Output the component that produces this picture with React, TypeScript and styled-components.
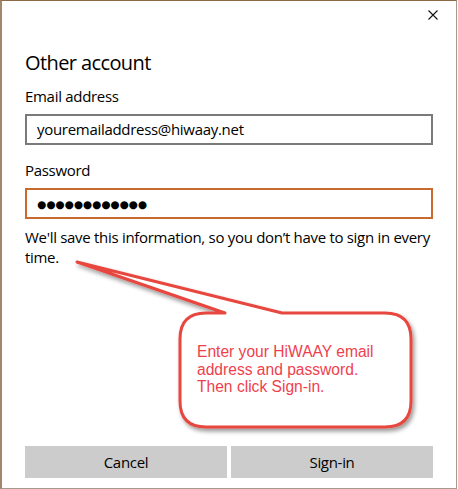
import React from 'react';
import styled, { createGlobalStyle } from 'styled-components';

const GlobalStyle = createGlobalStyle`
  html, body {
    margin: 0;
    padding: 0;
    background: #ffffff;
  }
`;

const Page = styled.div`
  position: relative;
  width: 458px;
  height: 489px;
  overflow: hidden;
`;

const Frame = styled.div`
  box-sizing: border-box;
  width: 457px;
  height: 489px;
  display: flex;
  flex-direction: column;
  background: #ffffff;
  border-top: 1px solid #8c6a48;
  border-left: 2px solid #a3876b;
  border-right: 1px solid #a89a8b;
  border-bottom: 1px solid #a89a8b;
  font-family: 'Open Sans', 'Noto Sans', sans-serif;
  color: #000000;
`;

const TitleBar = styled.div`
  height: 48px;
  display: flex;
  justify-content: flex-end;
  align-items: flex-start;
  padding: 9px 18px 0 0;
  box-sizing: border-box;
`;

const CloseButton = styled.button`
  width: 10px;
  height: 10px;
  padding: 0;
  border: none;
  background: transparent;
  display: flex;
  cursor: pointer;
`;

const Body = styled.div`
  flex: 1;
  display: flex;
  flex-direction: column;
  padding: 0 23px 10px 23px;
`;

const Title = styled.h1`
  margin: 0;
  font-size: 20px;
  line-height: 28px;
  font-weight: 400;
  letter-spacing: -0.6px;
`;

const Label = styled.div<{ $gap: number }>`
  margin-top: ${({ $gap }) => $gap}px;
  font-size: 15px;
  line-height: 20px;
  letter-spacing: -0.3px;
`;

const Field = styled.div<{ $focused?: boolean }>`
  box-sizing: border-box;
  height: 31px;
  margin-top: 8px;
  padding: 0 10px;
  border: 2px solid ${({ $focused }) => ($focused ? '#c8692d' : '#7a7a7a')};
  font-size: 15px;
  line-height: 27px;
  letter-spacing: -0.3px;
  white-space: nowrap;
  overflow: hidden;
`;

const Dots = styled.span`
  font-family: 'DejaVu Sans', sans-serif;
  font-size: 10.5px;
  letter-spacing: 0;
  position: relative;
  top: -1px;
`;

const Note = styled.p`
  margin: 8px 0 0 0;
  font-size: 15px;
  line-height: 20px;
  letter-spacing: -0.3px;
`;

const Spacer = styled.div`
  flex: 1;
`;

const ButtonRow = styled.div`
  display: grid;
  grid-template-columns: 1fr 1fr;
  gap: 4px;
`;

const Button = styled.button`
  height: 32px;
  border: none;
  background: #cccccc;
  font-family: 'Open Sans', 'Noto Sans', sans-serif;
  font-size: 15px;
  letter-spacing: -0.3px;
  color: #000000;
  padding: 0;
  cursor: pointer;
`;

const Callout = styled.svg`
  position: absolute;
  left: 0;
  top: 0;
  pointer-events: none;
`;

const CalloutText = styled.div`
  position: absolute;
  left: 197px;
  top: 343px;
  white-space: nowrap;
  font-family: 'Liberation Sans', Arial, sans-serif;
  font-size: 15.6px;
  line-height: 17.5px;
  color: #ef3f4d;
`;

const CloseIcon = () => (
  <svg width="10" height="10" viewBox="0 0 10 10">
    <path d="M0.5 0.5 L9.5 9.5 M9.5 0.5 L0.5 9.5" stroke="#111" strokeWidth="1.1" fill="none" />
  </svg>
);

const calloutPath =
  'M225 313 L77 262 L282 313 L385 313 Q411 313 411 339 L411 401 Q411 427 385 427 ' +
  'L206 427 Q180 427 180 401 L180 339 Q180 313 206 313 Z';

export default function App() {
  return (
    <Page>
      <GlobalStyle />
      <Frame>
        <TitleBar>
          <CloseButton aria-label="Close">
            <CloseIcon />
          </CloseButton>
        </TitleBar>
        <Body>
          <Title>Other account</Title>
          <Label $gap={9}>Email address</Label>
          <Field>youremailaddress@hiwaay.net</Field>
          <Label $gap={15}>Password</Label>
          <Field $focused>
            <Dots>●●●●●●●●●●●●</Dots>
          </Field>
          <Note>We'll save this information, so you don’t have to sign in every time.</Note>
          <Spacer />
          <ButtonRow>
            <Button>Cancel</Button>
            <Button>Sign-in</Button>
          </ButtonRow>
        </Body>
      </Frame>
      <Callout width="458" height="489" viewBox="0 0 458 489">
        <defs>
          <filter id="calloutShadow" x="-10%" y="-10%" width="130%" height="140%">
            <feDropShadow dx="2" dy="3" stdDeviation="2" floodColor="#000" floodOpacity="0.4" />
          </filter>
        </defs>
        <path
          d={calloutPath}
          fill="#ffffff"
          stroke="#e8473f"
          strokeWidth="3"
          strokeLinejoin="round"
          filter="url(#calloutShadow)"
        />
      </Callout>
      <CalloutText>
        Enter your HiWAAY email
        <br />
        address and password.
        <br />
        Then click Sign-in.
      </CalloutText>
    </Page>
  );
}
